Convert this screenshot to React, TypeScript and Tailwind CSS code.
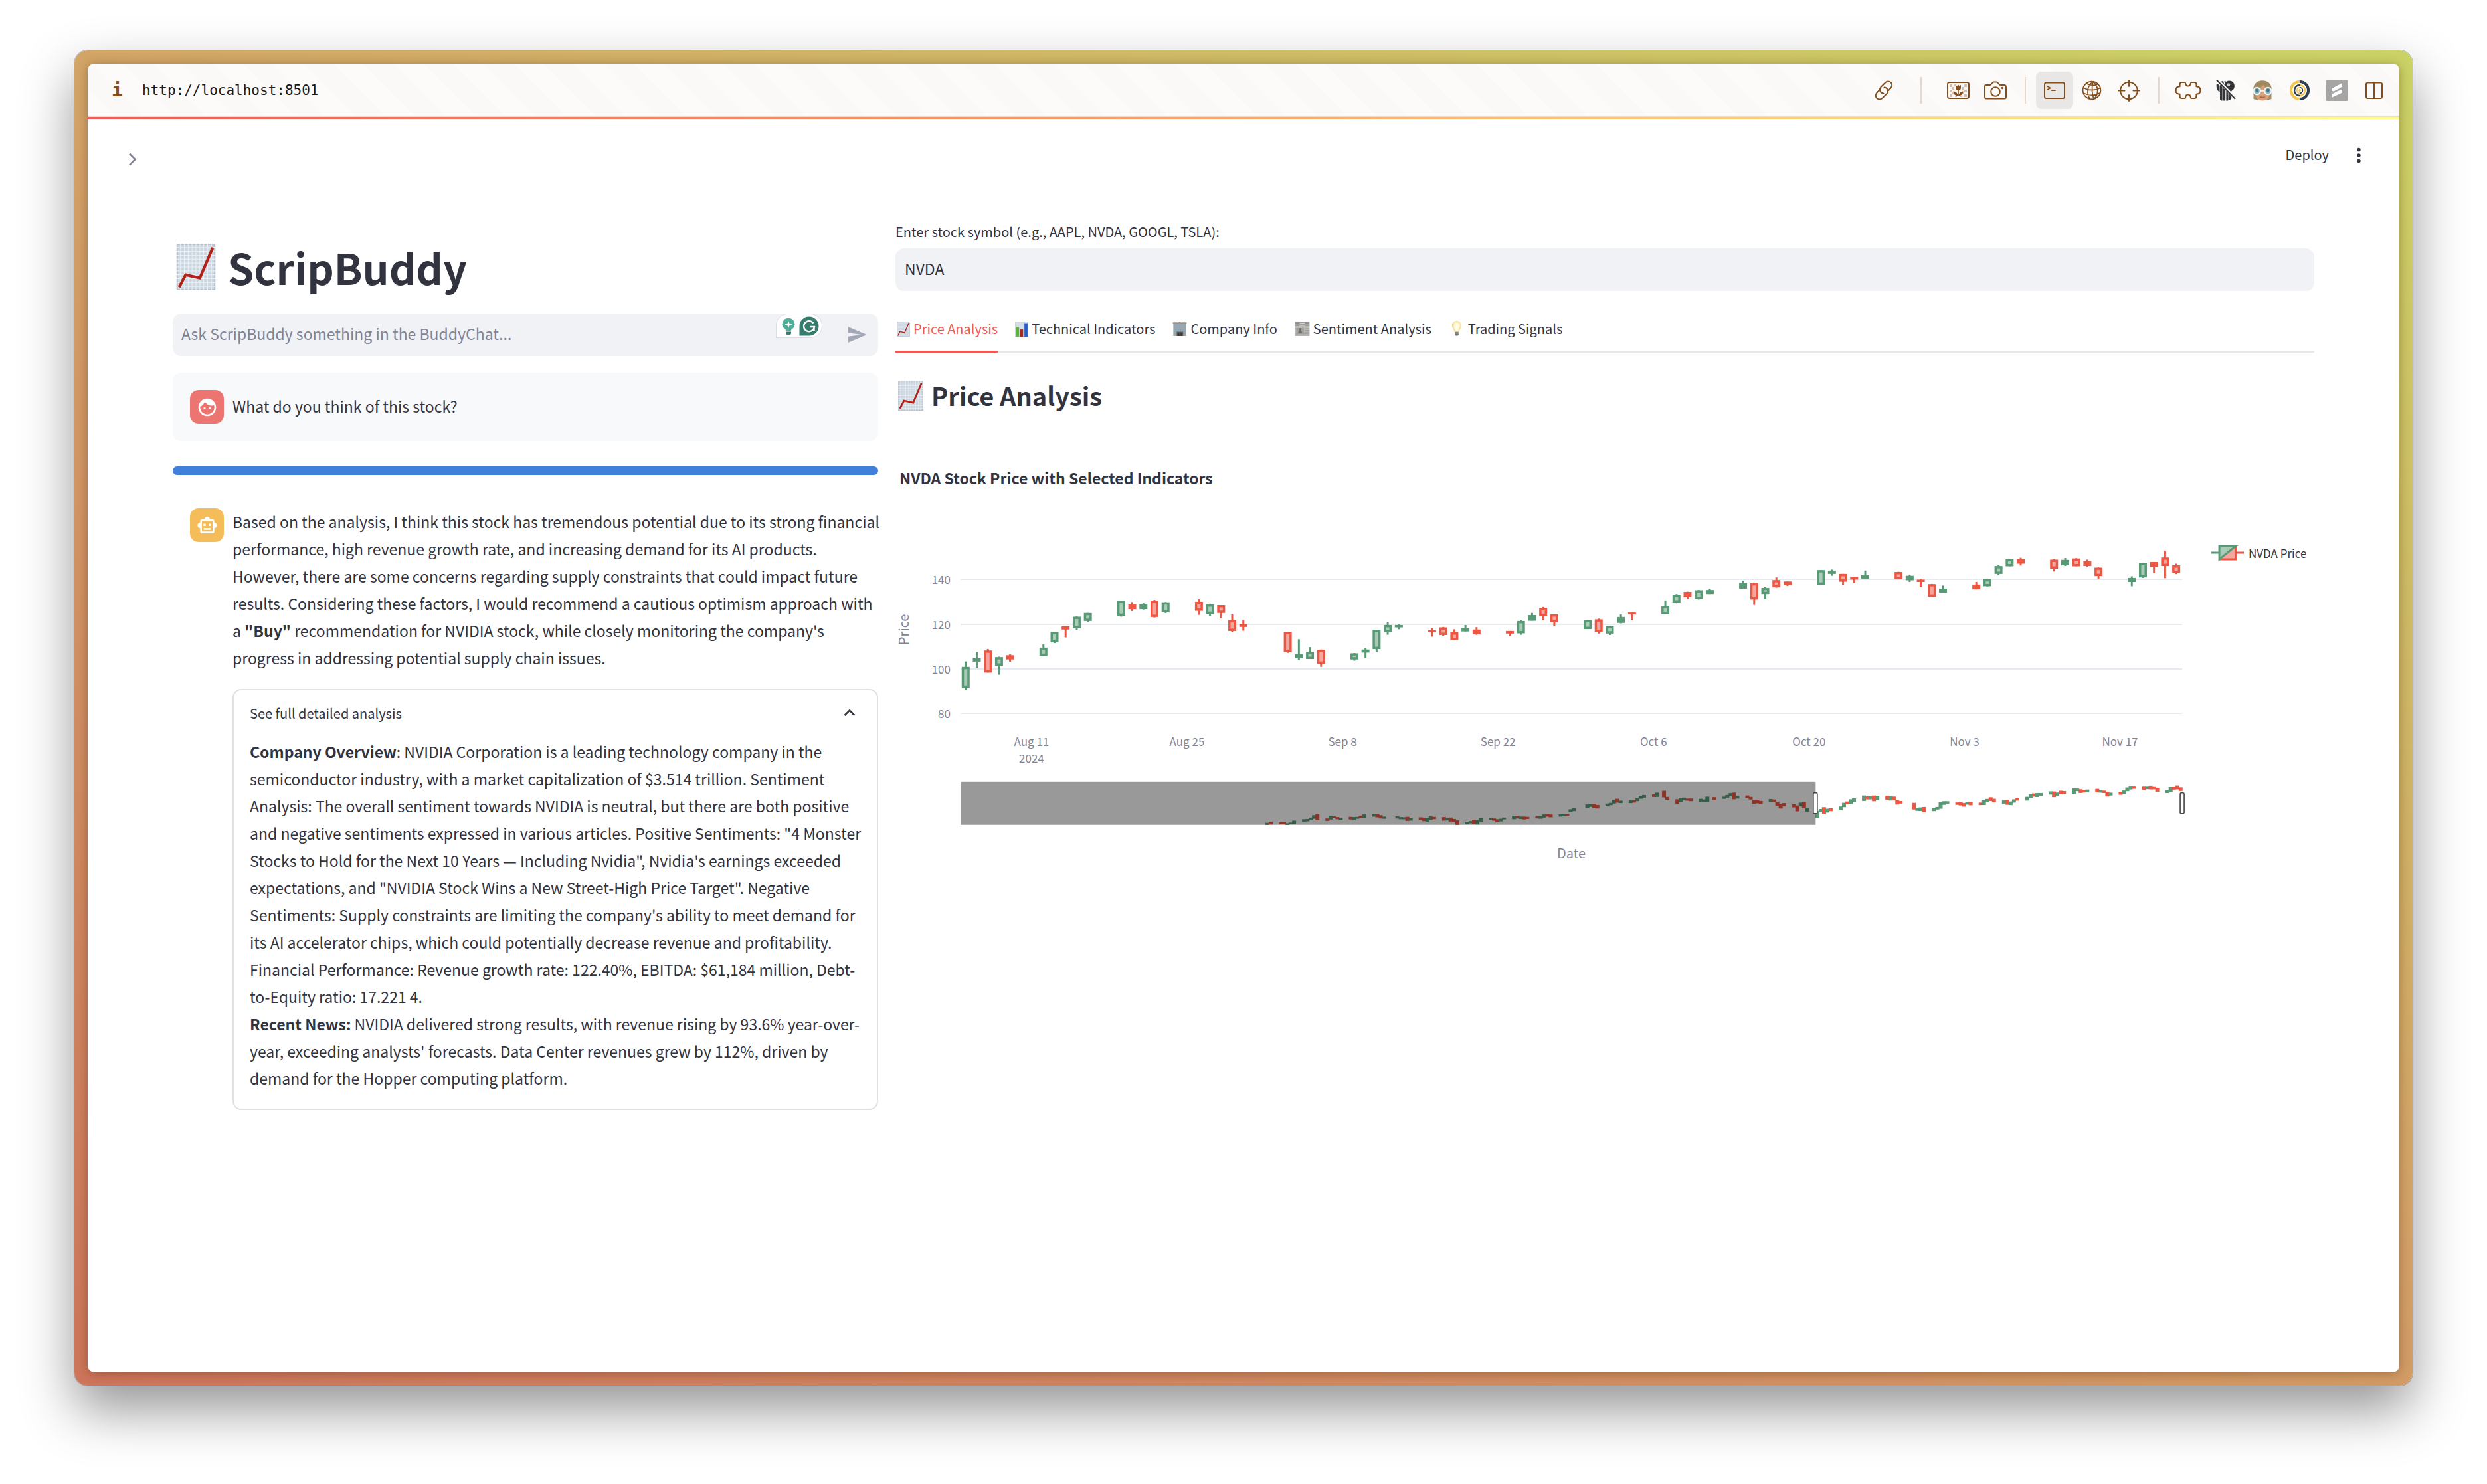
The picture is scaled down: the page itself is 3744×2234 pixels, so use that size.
import type { ReactNode } from "react";
import { MdFace, MdOutlineSmartToy, MdSend } from "react-icons/md";

/* ---------- Toolbar icons ---------- */

const BROWN = "#854d1a";

function Line({ children }: { children: ReactNode }) {
  return (
    <svg
      width="36"
      height="36"
      viewBox="0 0 36 36"
      fill="none"
      stroke={BROWN}
      strokeWidth="2"
      strokeLinecap="round"
      strokeLinejoin="round"
      aria-hidden="true"
    >
      {children}
    </svg>
  );
}

const LinkIcon = () => (
  <Line>
    <path d="M17.500 22.500a5.600 5.600 0 0 1-4.200-9.200l7-7a5.600 5.600 0 0 1 8.200-.2 5.600 5.600 0 0 1 .2 8L25.200 18" />
    <path d="M18.500 13.500a5.600 5.600 0 0 1 4.200 9.200l-7 7a5.600 5.600 0 0 1-8.200.2 5.600 5.600 0 0 1-.2-8L10.800 18" />
  </Line>
);

const ImageIcon = () => (
  <Line>
    <rect x="2" y="6" width="32" height="24" rx="3" />
    <path
      d="M5 9h4v4H5zM12 9h3v3h-3zM27 9h4v4h-4zM9 13h3v4H9zM24 13h3v4h-3zM5 17h4v4H5zM27 17h4v4h-4zM9 21h2v3H9zM25 21h2v3h-2zM5 24h4v4H5zM27 24h4v4h-4zM13 26h3v2h-3zM20 26h3v2h-3z"
      fill="#d3bda9"
      stroke="none"
    />
    <g fill={BROWN} stroke="none">
      <path d="M14 10l2.200 1.400L18 9.500l1.800 1.900L22 10v4a4 4 0 0 1-8 0z" />
      <path d="M17.200 16h1.600v11h-1.600z" />
      <path d="M10.500 19.500c4 .3 6.300 2.500 7 6.500-4 .3-6.500-2-7-6.500zM25.500 19.500c-4 .3-6.300 2.500-7 6.500 4 .3 6.500-2 7-6.500z" />
    </g>
  </Line>
);

const CameraIcon = () => (
  <Line>
    <path d="M4 10h6c2 0 3-4.500 5-4.500h5c2 0 3 4.500 5 4.500h6a3 3 0 0 1 3 3v15a2.500 2.500 0 0 1-2.500 2.500h-27A2.500 2.500 0 0 1 2 28V12a2 2 0 0 1 2-2z" />
    <circle cx="18" cy="20" r="6.800" />
    <circle cx="28.500" cy="14.500" r="1" fill={BROWN} strokeWidth="1.500" />
  </Line>
);

const TerminalIcon = () => (
  <Line>
    <rect x="3" y="6.500" width="30" height="23.500" rx="2.500" />
    <path d="M7.500 12l4 2.500-4 2.500M14 18h5" />
  </Line>
);

const GlobeIcon = () => (
  <Line>
    <g strokeWidth="1.700">
      <circle cx="18" cy="18" r="13.400" />
      <path d="M20 5C11 10 10 24 15 30.500M20 5c8 6 9 18 2 25.500M20 5c-2 8-2 18 1 26M10 7.500c4 3 13 4 17.500 1M5.500 14.500c8 4 18 4 25 0M6 22.500c8 3.500 17 3.500 24-.5" />
    </g>
  </Line>
);

const CrosshairIcon = () => (
  <Line>
    <circle cx="18" cy="18.500" r="12.800" />
    <path d="M18 3v9M18 25v9M2.500 18.500h9M24.500 18.500h9" />
  </Line>
);

const PuzzleIcon = () => (
  <svg width="42" height="36" viewBox="0 0 42 36" fill="none" stroke={BROWN} strokeWidth="2.200" strokeLinejoin="round" aria-hidden="true">
    <path d="M11.500 6h4.200c.8 0 1.200.4 1.300 1.200C17.300 10 19 11.500 21 11.500s3.700-1.500 4-4.300c.1-.8.500-1.200 1.300-1.200h4.200c2 0 3 1 3 3v3.200c4 .2 6 2.700 6 5.800s-2 5.600-6 5.800V27c0 2-1 3-3 3h-4.200c-.8 0-1.200-.4-1.300-1.200-.3-2.800-2-4.300-4-4.300s-3.700 1.500-4 4.300c-.1.800-.500 1.200-1.300 1.200h-4.200c-2 0-3-1-3-3v-3.200c-4-.2-6-2.700-6-5.800s2-5.600 6-5.800V9c0-2 1-3 3-3z" />
  </svg>
);

const GhostIcon = () => (
  <svg width="36" height="36" viewBox="0 0 36 36" aria-hidden="true">
    <g fill="#343538">
      <path d="M5 7c-1 6 0 11 4.500 13.500V11z" />
      <path d="M10 10h3.600v23.500c-1.400 0-2.800-.5-3.600-1.500zM14.800 15h3.400v18.500h-3.400zM19.400 18h3.200v15c-1 .8-2.300.8-3.200.5zM23.800 18h3.400v12c-.5 1.500-2 2.300-3.400 2z" />
      <circle cx="24" cy="11.500" r="8" />
      <path d="M10.500 5.500c1.500-1.200 3-1.700 4.500-1.500l1.500 6.500zM16.500 4.500l2-.8-.5 7z" />
    </g>
    <circle cx="23" cy="9.500" r="2.300" fill="#c9c9c9" />
    <path d="M6 2.500L34 30.500" stroke="#fafaf8" strokeWidth="4.500" />
    <path d="M5 2.500L33 31" stroke="#343538" strokeWidth="2" />
  </svg>
);

const FaceIcon = () => (
  <svg width="36" height="36" viewBox="0 0 36 36" aria-hidden="true">
    <path d="M4.500 31V14h27v17l-3.500 1H8z" fill="#a48c63" />
    <path d="M7.500 14l7-5h8l6 5v10c0 5.500-4.500 9.500-10.500 9.500S7.500 29.500 7.500 24z" fill="#d9a078" />
    <path d="M4 18C4 8.500 9.500 3.300 18 3.300S32 8.500 32 18c-5-1-9.500-3.500-12.500-8C17 13.500 11 17 4 18z" fill="#a18a62" />
    <path d="M15 18.500h6" stroke="#eef6f7" strokeWidth="2.400" />
    <circle cx="9.700" cy="19" r="5.200" fill="#86b1b8" stroke="#eef6f7" strokeWidth="2.200" />
    <circle cx="26.300" cy="19" r="5.200" fill="#86b1b8" stroke="#eef6f7" strokeWidth="2.200" />
    <circle cx="9.700" cy="18" r="2.400" fill="#47727e" />
    <circle cx="26.300" cy="18" r="2.400" fill="#47727e" />
    <path d="M14 27.700q4 1.600 8 0" stroke="#a8614d" strokeWidth="1.500" fill="none" />
  </svg>
);

const RingIcon = () => (
  <svg width="36" height="36" viewBox="0 0 36 36" fill="none" aria-hidden="true">
    <circle cx="18" cy="18" r="14" fill="#fff" />
    <path d="M18 5a13 13 0 0 0 0 26" stroke="#f4c64e" strokeWidth="4.200" />
    <path d="M18 5a13 13 0 0 1 0 26" stroke="#2e3f52" strokeWidth="4.200" />
    <path d="M18 10a8 8 0 0 0 0 16" stroke="#2e3f52" strokeWidth="2.400" />
    <path d="M18 10a8 8 0 0 1 0 16" stroke="#f4c64e" strokeWidth="2.400" />
    <path d="M18 13.600a4.400 4.400 0 0 0 0 8.800" stroke="#f4c64e" strokeWidth="1.800" />
    <path d="M18 13.600a4.400 4.400 0 0 1 0 8.800" stroke="#2e3f52" strokeWidth="1.800" />
    <circle cx="18" cy="18" r="1.900" fill="#f4c64e" />
  </svg>
);

const SquareIcon = () => (
  <svg width="36" height="36" viewBox="0 0 36 36" aria-hidden="true">
    <rect x="2" y="2" width="32" height="32" rx="1.500" fill="#a5a5a5" />
    <path d="M10 15.500L26 7v5.500l-6 3.500-7 3.500-3-1zM10 24l9.500-5 6.500-2.500v5L10 29z" fill="#fff" />
  </svg>
);

const PanelIcon = () => (
  <Line>
    <rect x="6" y="6.500" width="24" height="23.500" rx="2.500" />
    <path d="M18 6.500V30" />
  </Line>
);

/* ---------- Emoji drawings ---------- */

function Sheet() {
  return (
    <>
      <rect x="0" y="0" width="30" height="36" fill="#ccd6df" />
      <rect x="0.500" y="0.500" width="29" height="35" fill="none" stroke="#b9c0c7" />
      <path
        d="M3 0v36M6 0v36M9 0v36M12 0v36M15 0v36M18 0v36M21 0v36M24 0v36M27 0v36M0 3h30M0 6h30M0 9h30M0 12h30M0 15h30M0 18h30M0 21h30M0 24h30M0 27h30M0 30h30M0 33h30"
        stroke="#e6edf4"
        strokeWidth="0.600"
      />
    </>
  );
}

function ChartUp({ className }: { className: string }) {
  return (
    <svg className={className} viewBox="0 0 30 36" role="img" aria-label="Chart increasing">
      <Sheet />
      <path d="M2 33.500l5-9.500 11 2.500L28 3" fill="none" stroke="#b3221a" strokeWidth="2.200" />
    </svg>
  );
}

const BarChart = () => (
  <svg className="h-[23px] w-[20px] shrink-0" viewBox="0 0 30 36" role="img" aria-label="Bar chart">
    <Sheet />
    <path d="M2 13h7v23H2z" fill="#58b53a" />
    <path d="M11.500 19h7v17h-7z" fill="#a8261d" />
    <path d="M21.500 4h7.500v32h-7.500z" fill="#2a5ec4" />
  </svg>
);

const Building = () => (
  <svg className="h-[22px] w-[22px] shrink-0" viewBox="0 0 34 34" role="img" aria-label="Office building">
    <path d="M1 2h14V0h4v2h14v3H1z" fill="#9b9488" />
    <path d="M2 5h30v29H2z" fill="#a3a7a6" />
    <path d="M4 7h3v3H4zM9 7h3v3H9zM14 7h3v3h-3zM19 7h3v3h-3zM24 7h3v3h-3zM28 7h2v3h-2zM4 12h3v3H4zM9 12h3v3H9zM14 12h3v3h-3zM19 12h3v3h-3zM24 12h3v3h-3zM4 17h3v3H4zM9 17h3v3H9zM14 17h3v3h-3zM19 17h3v3h-3zM24 17h3v3h-3zM4 22h3v3H4zM9 22h3v3H9zM24 22h3v3h-3zM4 27h3v3H4zM28 12h2v3h-2zM28 17h2v3h-2zM28 22h2v3h-2zM28 27h2v3h-2z" fill="#7ea9cc" />
    <path d="M10 24h15v10H10z" fill="#5d564f" />
    <path d="M12 27h4v7h-4zM19 27h4v7h-4z" fill="#27384a" />
  </svg>
);

const Newspaper = () => (
  <svg className="h-[22px] w-[23px] shrink-0" viewBox="0 0 34 34" role="img" aria-label="Newspaper">
    <path d="M0 0h34v34H0z" fill="#bdbcb8" />
    <path d="M1 2h32v5H1z" fill="#8b8a87" />
    <path d="M11 3h12v3H11z" fill="#d6d5d1" />
    <path d="M1 10h9M24 10h9M1 13h9M24 13h9M24 17h9M24 21h9M24 25h9M1 29h32M1 32h32" stroke="#92918e" strokeWidth="1.300" />
    <path d="M3 15h18v12H3z" fill="#a09f9c" />
    <path d="M8 27c0-5 2-6 4-6s4 1 4 6zM10 16h4v5h-4z" fill="#6f6e6b" />
  </svg>
);

const Bulb = () => (
  <svg className="h-[24px] w-[24px] shrink-0" viewBox="0 0 36 36" role="img" aria-label="Light bulb">
    <path d="M18 1c6 0 10 4 10 10 0 6-5 8-5.500 14h-9C13 19 8 17 8 11 8 5 12 1 18 1z" fill="#fbeeb4" stroke="#ecd98a" strokeWidth="1.500" />
    <path d="M18 5c3.500 0 6 2.500 6 6s-3 6-3.500 12h-5C15 17 12 15 12 11s2.500-6 6-6z" fill="#fffbe6" />
    <path d="M14 25h8v6l-2 3h-4l-2-3z" fill="#8d8f8c" />
    <path d="M14 27.500h8M14 30.500h8" stroke="#5f615f" strokeWidth="1.200" />
  </svg>
);

/* ---------- Price chart ---------- */

type Candle = [day: number, up: 0 | 1, high: number, top: number, bottom: number, low: number];

const CANDLES: Candle[] = [
  [0, 1, 604, 627, 715, 724], [1, 1, 563, 591, 605, 631], [2, 0, 552, 558, 651, 651], [3, 1, 584, 586, 622, 660], [4, 0, 574, 578, 596, 605],
  [7, 1, 532, 546, 581, 581], [8, 1, 479, 479, 524, 527], [9, 0, 456, 456, 470, 503], [10, 1, 415, 416, 465, 472], [11, 1, 400, 400, 434, 437],
  [14, 1, 348, 348, 412, 416], [15, 0, 354, 364, 384, 392], [16, 1, 359, 363, 384, 386], [17, 0, 345, 348, 417, 419], [18, 1, 354, 355, 398, 400],
  [21, 0, 342, 353, 391, 408], [22, 1, 361, 364, 404, 412], [23, 0, 367, 367, 400, 423], [24, 0, 406, 430, 476, 479], [25, 0, 430, 448, 459, 475],
  [29, 0, 480, 480, 566, 568], [30, 1, 511, 573, 590, 598], [31, 1, 544, 563, 594, 594], [32, 0, 554, 555, 614, 627],
  [35, 1, 569, 570, 596, 601], [36, 1, 547, 554, 567, 590], [37, 1, 471, 471, 552, 566], [38, 1, 440, 451, 482, 492], [39, 1, 448, 451, 461, 469],
  [42, 0, 465, 473, 482, 500], [43, 0, 459, 461, 493, 497], [44, 0, 469, 482, 515, 515], [45, 1, 451, 463, 478, 478], [46, 0, 460, 470, 490, 492],
  [49, 0, 476, 476, 487, 496], [50, 1, 430, 434, 486, 492], [51, 1, 400, 409, 433, 433], [52, 0, 375, 379, 413, 431], [53, 0, 406, 406, 439, 454],
  [56, 1, 430, 430, 468, 468], [57, 0, 424, 427, 481, 487], [58, 1, 454, 455, 487, 493], [59, 1, 406, 417, 442, 444], [60, 0, 397, 398, 406, 431],
  [63, 1, 347, 371, 405, 405], [64, 1, 320, 323, 356, 359], [65, 0, 310, 311, 333, 341], [66, 1, 303, 304, 341, 343], [67, 1, 298, 303, 320, 320],
  [70, 1, 264, 273, 297, 297], [71, 0, 272, 274, 343, 366], [72, 1, 291, 294, 320, 339], [73, 0, 250, 261, 292, 293], [74, 0, 267, 267, 282, 286],
  [77, 1, 219, 219, 281, 281], [78, 1, 217, 221, 235, 243], [79, 0, 235, 235, 268, 282], [80, 0, 247, 248, 259, 273], [81, 1, 221, 240, 255, 255],
  [84, 0, 226, 227, 258, 258], [85, 1, 238, 243, 262, 269], [86, 0, 256, 259, 269, 289], [87, 0, 277, 278, 331, 332], [88, 1, 284, 297, 314, 314],
  [91, 0, 269, 280, 300, 300], [92, 1, 256, 257, 287, 288], [93, 1, 198, 202, 235, 240], [94, 1, 171, 172, 203, 203], [95, 0, 167, 173, 192, 200],
  [98, 0, 173, 175, 213, 225], [99, 1, 168, 176, 199, 202], [100, 0, 169, 170, 203, 203], [101, 0, 175, 181, 202, 207], [102, 0, 208, 209, 244, 258],
  [105, 1, 245, 252, 269, 287], [106, 1, 188, 189, 250, 252], [107, 0, 185, 185, 207, 232], [108, 0, 137, 166, 202, 253], [109, 0, 192, 199, 231, 236],
];

type Bar = [day: number, up: 0 | 1, top: number, bottom: number];

const HISTORY: Bar[] = [
  [-165, 1, 1285, 1294], [-164, 0, 1281, 1292], [-161, 0, 1282, 1291], [-160, 0, 1283, 1291], [-159, 1, 1287, 1294], [-158, 1, 1284, 1290], [-157, 1, 1276, 1290],
  [-154, 1, 1270, 1280], [-153, 1, 1269, 1279], [-152, 1, 1263, 1272], [-151, 1, 1253, 1268], [-150, 0, 1248, 1274],
  [-147, 0, 1267, 1277], [-146, 1, 1256, 1271], [-145, 0, 1258, 1266], [-144, 0, 1261, 1270], [-143, 1, 1265, 1274],
  [-140, 0, 1260, 1271], [-139, 1, 1261, 1274], [-138, 1, 1260, 1268], [-137, 0, 1255, 1264], [-136, 1, 1250, 1266],
  [-133, 1, 1249, 1259], [-132, 0, 1247, 1262], [-131, 0, 1253, 1267], [-130, 1, 1259, 1268],
  [-126, 1, 1258, 1267], [-125, 1, 1261, 1270], [-124, 1, 1262, 1270], [-123, 0, 1260, 1277], [-122, 1, 1264, 1276],
  [-119, 0, 1262, 1273], [-118, 0, 1265, 1278], [-117, 1, 1266, 1280], [-116, 1, 1258, 1274], [-115, 0, 1260, 1270],
  [-112, 0, 1261, 1276], [-111, 1, 1265, 1275], [-110, 0, 1263, 1280], [-109, 0, 1269, 1281], [-108, 0, 1275, 1294],
  [-105, 1, 1283, 1291], [-104, 1, 1278, 1287], [-103, 0, 1272, 1290], [-102, 1, 1274, 1292], [-101, 1, 1266, 1280],
  [-98, 1, 1265, 1273], [-97, 0, 1267, 1276], [-96, 0, 1270, 1283], [-95, 1, 1268, 1279], [-94, 1, 1263, 1271],
  [-91, 1, 1255, 1270], [-90, 0, 1257, 1267], [-89, 1, 1259, 1269], [-88, 0, 1259, 1271], [-87, 0, 1260, 1269],
  [-84, 0, 1258, 1267], [-83, 1, 1256, 1268], [-82, 1, 1250, 1263], [-81, 0, 1248, 1259], [-80, 0, 1250, 1262],
  [-77, 1, 1249, 1259], [-76, 1, 1248, 1258], [-75, 0, 1247, 1256], [-74, 1, 1228, 1241], [-73, 1, 1224, 1236],
  [-69, 1, 1208, 1223], [-68, 1, 1205, 1218], [-67, 0, 1205, 1222], [-66, 0, 1210, 1225],
  [-63, 1, 1204, 1214], [-62, 1, 1201, 1211], [-61, 1, 1188, 1204], [-60, 0, 1184, 1200], [-59, 1, 1192, 1202],
  [-56, 1, 1189, 1202], [-55, 0, 1189, 1200], [-54, 1, 1182, 1194], [-53, 1, 1171, 1184], [-52, 1, 1168, 1179],
  [-49, 0, 1165, 1176], [-48, 1, 1158, 1176], [-46, 0, 1150, 1178], [-45, 0, 1176, 1188],
  [-42, 0, 1186, 1205], [-41, 1, 1180, 1198], [-40, 1, 1179, 1190], [-39, 0, 1183, 1192], [-38, 0, 1183, 1194],
  [-35, 1, 1184, 1196], [-34, 1, 1187, 1198], [-33, 1, 1175, 1198], [-31, 0, 1177, 1189],
  [-28, 1, 1175, 1184], [-27, 1, 1168, 1179], [-26, 1, 1160, 1172], [-25, 0, 1158, 1186], [-24, 1, 1171, 1183],
  [-21, 0, 1170, 1182], [-20, 0, 1176, 1187], [-19, 0, 1190, 1205], [-18, 0, 1188, 1203], [-17, 0, 1193, 1206],
  [-14, 1, 1185, 1199], [-13, 0, 1187, 1196], [-12, 0, 1196, 1214], [-11, 0, 1206, 1225], [-10, 0, 1202, 1216],
  [-7, 0, 1207, 1220], [-6, 0, 1212, 1237], [-5, 1, 1200, 1216], [-4, 0, 1198, 1224], [-3, 1, 1222, 1238],
];

const UP = "#589a76";
const DOWN = "#ee5644";
const LEFT = 98;
const RIGHT = 1938;
const dayX = (d: number) => 105.8 + 16.727 * d;
const rangeX = (d: number) => 1388.5 + 5.02 * d;
const levelY = (v: number) => v / 2.8 + 45;

const GRID: [string, number, number][] = [
  ["140", 259, 1],
  ["120", 448, 2],
  ["100", 635, 2],
  ["80", 824, 1],
];
const DATES = ["Aug 11", "Aug 25", "Sep 8", "Sep 22", "Oct 6", "Oct 20", "Nov 3", "Nov 17"];

function PriceChart() {
  return (
    <svg
      className="block h-auto w-full font-['Noto_Sans_CJK_SC',sans-serif]"
      viewBox="0 0 2137 585"
      role="img"
      aria-label="NVDA candlestick chart with range slider"
    >
      {GRID.map(([label, v, w]) => (
        <g key={label}>
          <rect x={LEFT} y={Math.round(levelY(v) - w / 2)} width={RIGHT - LEFT} height={w} fill="#e6e8ef" />
          <text x="83" y={levelY(v) + 7} textAnchor="end" fontSize="17" fill="#808495">
            {label}
          </text>
        </g>
      ))}
      <text x="0" y="0" transform="translate(20 213) rotate(-90)" textAnchor="middle" fontSize="20" fill="#808495">
        Price
      </text>
      {DATES.map((d, i) => (
        <text key={d} x={205 + 234.2 * i} y="388" textAnchor="middle" fontSize="17" fill="#808495">
          {d}
        </text>
      ))}
      <text x="205" y="413" textAnchor="middle" fontSize="17" fill="#808495">
        2024
      </text>

      {CANDLES.map(([d, up, high, top, bottom, low]) => {
        const x = dayX(d);
        const color = up ? UP : DOWN;
        const y = levelY(top);
        const h = levelY(bottom) - y;
        return (
          <g key={d}>
            <rect x={x - 1.5} y={levelY(high)} width="3" height={levelY(low) - levelY(high)} fill={color} />
            <rect x={x - 6} y={y} width="12" height={h} fill={color} />
            {h > 9 && <rect x={x - 2.5} y={y + 3.5} width="5" height={h - 7} fill={up ? "#aacbb8" : "#f5a79f"} />}
          </g>
        );
      })}

      {HISTORY.map(([d, up, top, bottom]) => (
        <rect key={d} x={rangeX(d) - 3} y={levelY(top)} width="6" height={levelY(bottom) - levelY(top)} fill={up ? UP : DOWN} />
      ))}
      {CANDLES.map(([d, up, , top, bottom]) => {
        const y = levelY(1089 + 0.2334 * top);
        return (
          <rect key={d} x={rangeX(d) - 3} y={y} width="6" height={levelY(1097 + 0.2334 * bottom) - y} fill={up ? UP : DOWN} />
        );
      })}
      <rect x={LEFT} y="442" width={1386 - LEFT} height="65" fill="#000" fillOpacity="0.400" />
      <rect x="1382.500" y="459" width="6" height="31" rx="1.500" fill="#fff" stroke="#444" strokeWidth="1.600" />
      <rect x="1935" y="459" width="6" height="31" rx="1.500" fill="#fff" stroke="#444" strokeWidth="1.600" />
      <text x="1018" y="557" textAnchor="middle" fontSize="20" fill="#808495">
        Date
      </text>

      <path d="M1994 107V87h25z" fill="#aacbb8" />
      <path d="M1994 107h25V87z" fill="#f5a79f" />
      <path d="M1994 107h25V87M2019 97h12" fill="none" stroke={DOWN} strokeWidth="3" />
      <path d="M1994 107V87h25zM1994 97h-12" fill="none" stroke={UP} strokeWidth="3" />
      <text x="2038" y="105" fontSize="17" fill="#31333f">
        NVDA Price
      </text>
    </svg>
  );
}

/* ---------- Page parts ---------- */

function ToolButton({ label, active, children }: { label: string; active?: boolean; children: ReactNode }) {
  return (
    <button
      type="button"
      aria-label={label}
      className={
        active
          ? "flex size-14 items-center justify-center rounded-lg bg-[#e8e7e5]"
          : "flex size-14 items-center justify-center rounded-lg"
      }
    >
      {children}
    </button>
  );
}

const Divider = ({ className }: { className: string }) => (
  <span className={className}>
    <span className="h-10 w-0.5 bg-[#e5d9cd]" />
  </span>
);

function Toolbar() {
  return (
    <header className="bg-[repeating-linear-gradient(45deg,#fcfbf9_0_32px,#faf9f7_32px_64px)]">
      <div className="flex h-20 items-center border-b-2 border-[#e1e1e1] pt-0.5 pr-[10px] pl-[36px]">
        <span className="w-[46px] font-['DejaVu_Sans_Mono',monospace] text-[28px] leading-9 font-bold text-[#854d1a]">i</span>
        <a href="http://localhost:8501" className="font-['DejaVu_Sans_Mono',monospace] text-[21px] leading-9 text-[#1a1a1a]">
          http://localhost:8501
        </a>
        <div className="ml-auto flex items-center">
          <ToolButton label="Copy link"><LinkIcon /></ToolButton>
          <Divider className="flex w-14 justify-center" />
          <ToolButton label="Capture image"><ImageIcon /></ToolButton>
          <ToolButton label="Take screenshot"><CameraIcon /></ToolButton>
          <Divider className="flex w-[33px] justify-center" />
          <ToolButton label="Console" active><TerminalIcon /></ToolButton>
          <ToolButton label="Network"><GlobeIcon /></ToolButton>
          <ToolButton label="Inspect"><CrosshairIcon /></ToolButton>
          <Divider className="flex w-[33px] justify-center" />
          <ToolButton label="Extensions"><PuzzleIcon /></ToolButton>
          <ToolButton label="Tracker blocker"><GhostIcon /></ToolButton>
          <ToolButton label="Profile"><FaceIcon /></ToolButton>
          <ToolButton label="Target"><RingIcon /></ToolButton>
          <ToolButton label="Sidekick"><SquareIcon /></ToolButton>
          <ToolButton label="Split view"><PanelIcon /></ToolButton>
        </div>
      </div>
      <div className="h-[3px] bg-linear-to-r from-[#f05b53] via-[#f7a86e] to-[#fef98c]" />
    </header>
  );
}

function AppBar() {
  return (
    <div className="flex h-[110px] items-center justify-between pr-[46px] pl-[56px]">
      <button type="button" aria-label="Open sidebar" className="pt-3 text-[#808495]">
        <svg width="24" height="24" viewBox="0 0 24 24" fill="none" stroke="currentColor" strokeWidth="2.500" aria-hidden="true">
          <path d="M7 3.500l8.500 8.500L7 20.500" />
        </svg>
      </button>
      <div className="flex items-center gap-[30px]">
        <button type="button" className="pb-0.5 text-[20px] leading-8">Deploy</button>
        <button type="button" aria-label="Main menu">
          <svg width="30" height="30" viewBox="0 0 30 30" fill="currentColor" aria-hidden="true">
            <circle cx="15" cy="6.500" r="2.700" />
            <circle cx="15" cy="15" r="2.700" />
            <circle cx="15" cy="23.500" r="2.700" />
          </svg>
        </button>
      </div>
    </div>
  );
}

function Chat() {
  return (
    <section className="min-w-0 pt-[27px]">
      <h1 className="flex h-[84px] items-center gap-[18px] pl-[5px] text-[63px] leading-[84px] font-bold">
        <ChartUp className="h-[70px] w-[60px] shrink-0" />
        ScripBuddy
      </h1>

      <form className="relative mt-[28px] flex h-16 items-center rounded-[13px] bg-[#f0f2f6] pr-4" onSubmit={(e) => e.preventDefault()}>
        <input
          type="text"
          aria-label="Chat message"
          placeholder="Ask ScripBuddy something in the BuddyChat..."
          className="h-full min-w-0 flex-1 bg-transparent pb-1 pl-[13px] text-[23px] outline-none placeholder:text-[#808495]"
        />
        <button type="submit" aria-label="Send" className="text-[#a3a8b8]">
          <MdSend size={32} />
        </button>
        <span className="absolute top-0 right-[84px] flex h-[37px] w-[70px] items-center justify-between rounded-[18px] rounded-bl-none border border-[#dadce6] bg-white px-[4px]">
          <svg width="28" height="28" viewBox="0 0 28 28" aria-hidden="true">
            <path d="M14 2a9 9 0 0 0-6 16c1.500 1.300 2 2 2.500 3h7c.5-1 1-1.700 2.500-3a9 9 0 0 0-6-16z" fill="#4fae97" />
            <path d="M10 22.500h8V25a2 2 0 0 1-2 2h-4a2 2 0 0 1-2-2z" fill="#3a7f70" />
            <path d="M14 6l1.500 4 4 1.500-4 1.500-1.500 4-1.500-4-4-1.500 4-1.500z" fill="#fff" />
          </svg>
          <svg width="30" height="30" viewBox="0 0 30 30" aria-hidden="true">
            <path d="M0.500 29.500V15A14.500 14.500 0 1 1 15 29.500z" fill="#367c6d" />
            <path d="M21.500 10.500A8 8 0 1 0 23 16h-6M22.500 16v6" fill="none" stroke="#fff" strokeWidth="2.400" />
          </svg>
        </span>
      </form>

      <article className="mt-[25px] flex gap-[13px] rounded-[13px] bg-[#f8f9fb] p-[26px]">
        <span className="flex size-[51px] shrink-0 items-center justify-center rounded-[13px] bg-[#ed7571] text-white">
          <MdFace size={32} />
        </span>
        <p className="py-[4px] text-[23px] leading-[41px]">What do you think of this stock?</p>
      </article>

      <div role="progressbar" aria-valuenow={100} aria-label="Progress" className="mt-[38px] h-[13px] rounded-full bg-[#4180da]" />

      <article className="mt-[24px] flex gap-[13px] py-[26px] pl-[26px]">
        <span className="flex size-[51px] shrink-0 items-center justify-center rounded-[13px] bg-[#f5bd5a] text-white">
          <MdOutlineSmartToy size={32} />
        </span>
        <div className="min-w-0 flex-1">
          <p className="-mr-2 text-[23px] leading-[41px]">
            Based on the analysis, I think this stock has tremendous potential due to its strong financial performance,
            high revenue growth rate, and increasing demand for its AI products. However, there are some concerns
            regarding supply constraints that could impact future results. Considering these factors, I would recommend
            a cautious optimism approach with a <strong>"Buy"</strong> recommendation for NVIDIA stock, while closely
            monitoring the company's progress in addressing potential supply chain issues.
          </p>
          <div className="mt-[26px] rounded-[13px] border-2 border-[#e0e1e4] pr-[18px] pl-[24px]">
            <button type="button" aria-expanded="true" className="flex h-[72px] w-full items-center justify-between pr-[11px] pb-0.5 text-[20px]">
              See full detailed analysis
              <svg width="24" height="24" viewBox="0 0 24 24" fill="none" stroke="currentColor" strokeWidth="2.500" aria-hidden="true">
                <path d="M4.500 15L12 7.500l7.500 7.500" />
              </svg>
            </button>
            <div className="pb-[25px] text-[23px] leading-[41px]">
              <p>
                <strong>Company Overview</strong>: NVIDIA Corporation is a leading technology company in the
                semiconductor industry, with a market capitalization of $3.514 trillion. Sentiment Analysis: The overall
                sentiment towards NVIDIA is neutral, but there are both positive and negative sentiments expressed in
                various articles. Positive Sentiments: "4 Monster Stocks to Hold for the Next 10 Years — Including
                Nvidia", Nvidia's earnings exceeded expectations, and "NVIDIA Stock Wins a New Street-High Price
                Target". Negative Sentiments: Supply constraints are limiting the company's ability to meet demand for
                its AI accelerator chips, which could potentially decrease revenue and profitability. Financial
                Performance: Revenue growth rate: 122.40%, EBITDA: $61,184 million, Debt-to-Equity ratio: 17.221 4.
              </p>
              <p>
                <strong>Recent News:</strong> NVIDIA delivered strong results, with revenue rising by 93.6%
                year-over-year, exceeding analysts' forecasts. Data Center revenues grew by 112%, driven by demand for
                the Hopper computing platform.
              </p>
            </div>
          </div>
        </div>
      </article>
    </section>
  );
}

function Tab({ label, icon, active }: { label: string; icon: ReactNode; active?: boolean }) {
  return (
    <button
      type="button"
      role="tab"
      aria-selected={!!active}
      className={
        active
          ? "-mb-[3px] flex h-[69px] items-center gap-[5px] border-b-[3px] border-[#ee5b53] pl-[2px] text-[#ee5b53]"
          : "flex h-[66px] items-center gap-[5px]"
      }
    >
      {icon}
      {label}
    </button>
  );
}

function Analysis() {
  return (
    <section className="min-w-0">
      <label htmlFor="symbol" className="block text-[20px] leading-8">
        Enter stock symbol (e.g., AAPL, NVDA, GOOGL, TSLA):
      </label>
      <input
        id="symbol"
        type="text"
        defaultValue="NVDA"
        className="mt-[9px] block h-16 w-full rounded-[13px] bg-[#f0f2f6] px-[14px] pb-1 text-[23px] outline-none"
      />
      <div role="tablist" className="mt-6 flex gap-[26px] border-b-[3px] border-[#e8e8e9] text-[20px]">
        <Tab active label="Price Analysis" icon={<ChartUp className="h-[23px] w-[20px] shrink-0" />} />
        <Tab label="Technical Indicators" icon={<BarChart />} />
        <Tab label="Company Info" icon={<Building />} />
        <Tab label="Sentiment Analysis" icon={<Newspaper />} />
        <Tab label="Trading Signals" icon={<Bulb />} />
      </div>
      <h2 className="mt-[37px] flex items-center gap-[12px] pl-[4px] text-[38px] leading-[54px] font-bold">
        <ChartUp className="h-[45px] w-[38px] shrink-0" />
        Price Analysis
      </h2>
      <h3 className="mt-[81px] pl-[6px] text-[23px] leading-8 font-bold">NVDA Stock Price with Selected Indicators</h3>
      <PriceChart />
    </section>
  );
}

export default function App() {
  return (
    <div className="flex min-h-screen bg-white px-28 pt-[76px] pb-[148px] font-['Noto_Sans_CJK_SC',sans-serif] text-[#31333f]">
      <div className="flex flex-1 rounded-[20px] bg-[linear-gradient(25deg,#cd755a,#d3a067,#cbd365)] p-5 shadow-[0_0_0_1px_rgba(90,90,110,0.450),0_36px_80px_rgba(0,0,0,0.420)]">
        <div className="flex min-w-0 flex-1 flex-col overflow-hidden rounded-[10px] bg-white shadow-[0_2px_16px_rgba(60,30,10,0.350)]">
          <Toolbar />
          <AppBar />
          <main className="grid flex-1 grid-cols-[1062fr_2136fr] gap-[26px] px-32 pt-11">
            <Chat />
            <Analysis />
          </main>
        </div>
      </div>
    </div>
  );
}
